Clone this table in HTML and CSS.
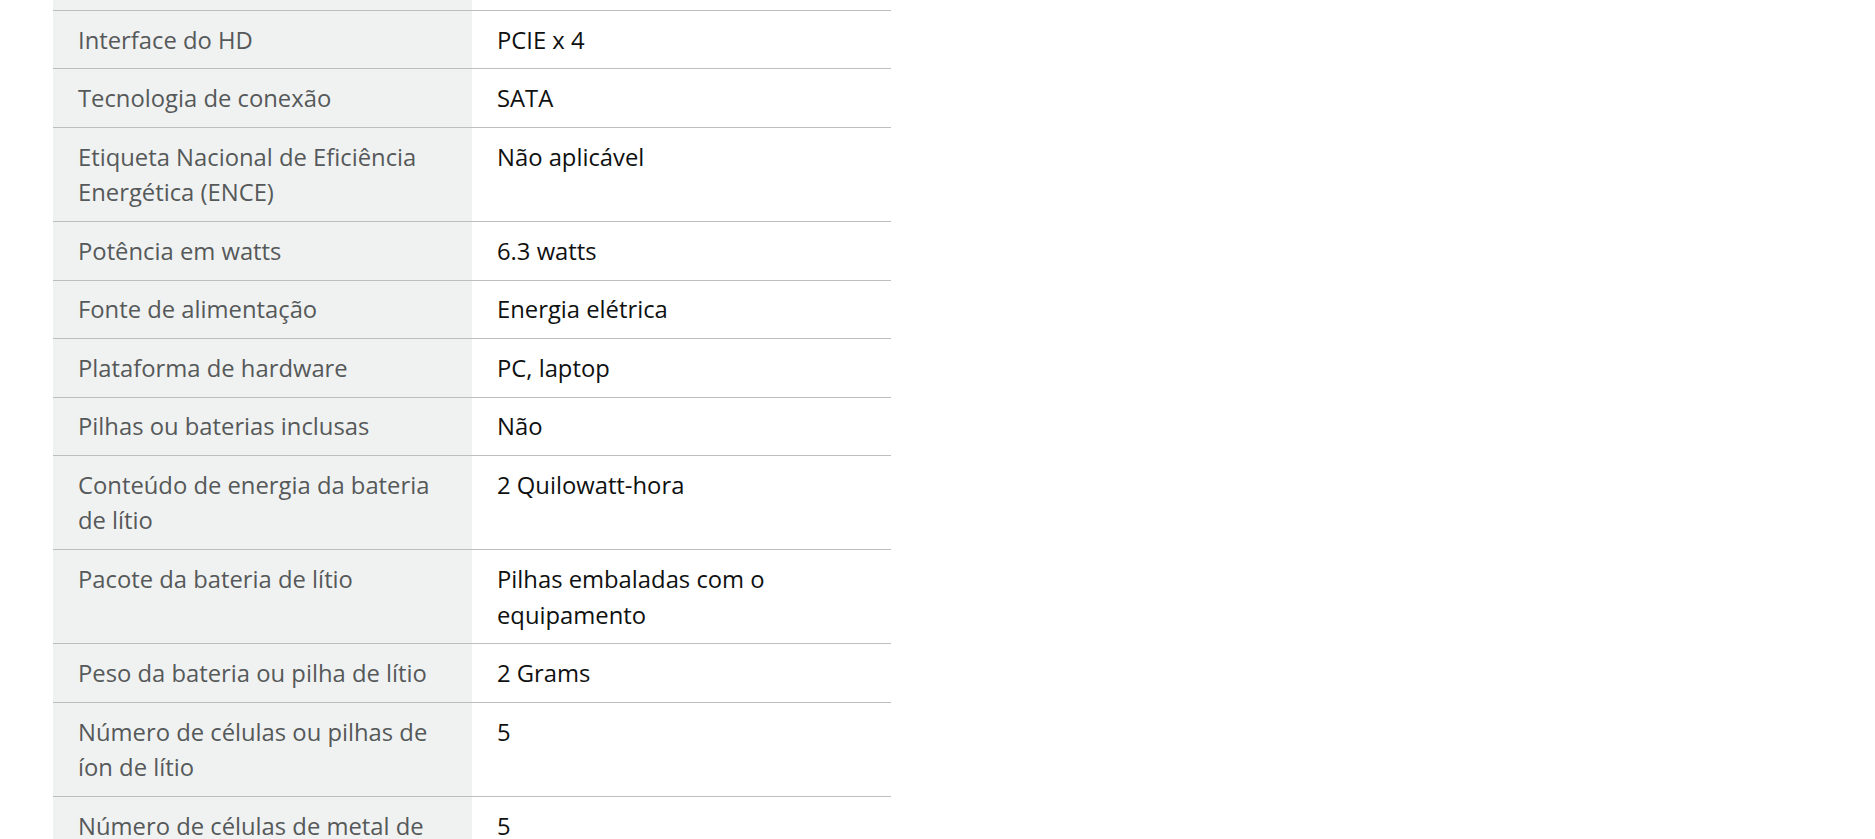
FILE: index.html
```html
<!DOCTYPE html>
<html lang="pt-BR">
<head>
<meta charset="utf-8">
<title>Detalhes técnicos</title>
<link rel="stylesheet" href="styles.css">
</head>
<body>
<div class="page">
  <table class="spec">
    <colgroup><col class="col-key"><col class="col-val"></colgroup>
    <tbody>
      <tr class="sliver"><th></th><td></td></tr>
      <tr><th>Interface do HD</th><td>PCIE x 4</td></tr>
      <tr><th>Tecnologia de conexão</th><td>SATA</td></tr>
      <tr><th>Etiqueta Nacional de Eficiência Energética (ENCE)</th><td>Não aplicável</td></tr>
      <tr><th>Potência em watts</th><td>6.3 watts</td></tr>
      <tr><th>Fonte de alimentação</th><td>Energia elétrica</td></tr>
      <tr><th>Plataforma de hardware</th><td>PC, laptop</td></tr>
      <tr><th>Pilhas ou baterias inclusas</th><td>Não</td></tr>
      <tr><th>Conteúdo de energia da bateria de lítio</th><td>2 Quilowatt-hora</td></tr>
      <tr><th>Pacote da bateria de lítio</th><td>Pilhas embaladas com o equipamento</td></tr>
      <tr><th>Peso da bateria ou pilha de lítio</th><td>2 Grams</td></tr>
      <tr><th>Número de células ou pilhas de íon de lítio</th><td>5</td></tr>
      <tr><th>Número de células de metal de lítio</th><td>5</td></tr>
    </tbody>
  </table>
</div>
</body>
</html>
```

FILE: styles.css
```css
html, body {
  margin: 0;
  padding: 0;
  background: #ffffff;
  overflow: hidden;
}

.page {
  padding-left: 53px;
  font-family: "Open Sans", "Noto Sans", Arial, sans-serif;
}

.spec {
  width: 838px;
  border-collapse: collapse;
  table-layout: fixed;
  font-size: 23.8px;
  line-height: 35.7px;
}

.col-key, .col-val {
  width: 50%;
}

.spec tr {
  border-top: 1px solid #bbbfbf;
}

.spec tr.sliver {
  border-top: none;
}

.spec th,
.spec td {
  padding: 11.6px 25px 10.2px;
  text-align: left;
  vertical-align: top;
  font-weight: 400;
}

.spec th {
  background: #f0f2f2;
  color: #565959;
}

.spec td {
  color: #0f1111;
}

.spec tr.sliver th,
.spec tr.sliver td {
  padding: 0;
  height: 10px;
}
```
